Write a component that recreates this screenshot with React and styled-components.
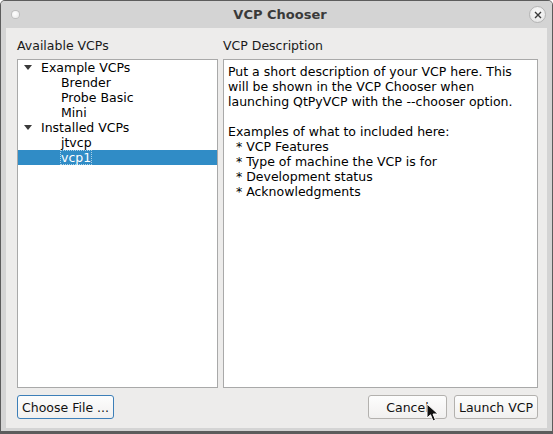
import React from "react";
import styled, { createGlobalStyle } from "styled-components";

const GlobalStyle = createGlobalStyle`
  html, body {
    margin: 0;
    padding: 0;
    background: #ffffff;
  }
  * {
    box-sizing: border-box;
  }
`;

const tree = [
  { label: "Example VCPs", children: ["Brender", "Probe Basic", "Mini"] },
  { label: "Installed VCPs", children: ["jtvcp", "vcp1"] },
];

const descLines = [
  "Put a short description of your VCP here. This",
  "will be shown in the VCP Chooser when",
  "launching QtPyVCP with the --chooser option.",
  "",
  "Examples of what to included here:",
  "  * VCP Features",
  "  * Type of machine the VCP is for",
  "  * Development status",
  "  * Acknowledgments",
];

const App = () => {
  const selected = "vcp1";
  return (
    <>
      <GlobalStyle />
      <Window>
        <TitleBar>
          <MenuDot />
          <Title>VCP Chooser</Title>
          <CloseButton>
            <svg width="8" height="8" viewBox="0 0 8 8">
              <path d="M1 1 L7 7 M7 1 L1 7" stroke="#3a3a3a" strokeWidth="1.4" />
            </svg>
          </CloseButton>
        </TitleBar>
        <Body>
          <Columns>
            <Column $width="201px">
              <Label>Available VCPs</Label>
              <TreeBox>
                {tree.map((group) => (
                  <React.Fragment key={group.label}>
                    <Row>
                      <Arrow>
                        <svg width="8" height="5" viewBox="0 0 8 5">
                          <path d="M0 0 L8 0 L4 5 Z" fill="#3a3a3a" />
                        </svg>
                      </Arrow>
                      <RowText>{group.label}</RowText>
                    </Row>
                    {group.children.map((c) => (
                      <Row key={c} $child $selected={c === selected}>
                        <RowText $focus={c === selected}>{c}</RowText>
                      </Row>
                    ))}
                  </React.Fragment>
                ))}
              </TreeBox>
            </Column>
            <Column $width="315px">
              <Label>VCP Description</Label>
              <DescBox>
                {descLines.map((l, i) => (
                  <DescLine key={i}>{l || "\u00a0"}</DescLine>
                ))}
              </DescBox>
            </Column>
          </Columns>
          <ButtonBar>
            <Button $focused $width="97px">Choose File ...</Button>
            <Spacer />
            <Button $width="79px">Cancel</Button>
            <Button $width="84px">Launch VCP</Button>
          </ButtonBar>
          <Cursor>
            <svg width="14" height="20" viewBox="0 0 14 20">
              <path
                d="M1 1 L1 15 L4.5 11.8 L7 18 L9.5 17 L7 11 L12 11 Z"
                fill="#111"
                stroke="#fff"
                strokeWidth="1"
                strokeLinejoin="round"
              />
            </svg>
          </Cursor>
        </Body>
      </Window>
    </>
  );
};

export default App;

const Window = styled.div`
  width: 553px;
  height: 434px;
  display: flex;
  flex-direction: column;
  background: #d4d4d4;
  border: 1px solid #5c5c5c;
  border-bottom: 3px solid #5c5c5c;
  border-radius: 5px 5px 0 0;
  font-family: "DejaVu Sans", "Liberation Sans", sans-serif;
  font-size: 12.5px;
  color: #000;
  overflow: hidden;
`;

const TitleBar = styled.div`
  height: 27px;
  flex: none;
  display: flex;
  align-items: center;
  padding: 0 6px 0 11px;
  background: #d4d4d4;
`;

const MenuDot = styled.div`
  width: 7px;
  height: 7px;
  border-radius: 50%;
  background: radial-gradient(circle at 40% 40%, #ffffff, #e6e6e6);
  box-shadow: 0 0 0 1px #bdbdbd;
`;

const Title = styled.div`
  flex: 1;
  text-align: center;
  font-weight: bold;
  font-size: 13px;
  color: #3a3a3a;
  padding-left: 12px;
`;

const CloseButton = styled.div`
  width: 17px;
  height: 17px;
  border-radius: 50%;
  display: flex;
  align-items: center;
  justify-content: center;
  background: radial-gradient(circle at 50% 35%, #fafafa, #e2e2e2);
  border: 1px solid #b4b4b4;
`;

const Body = styled.div`
  position: relative;
  flex: 1;
  margin: 0 5px 3px 5px;
  background: #edeceb;
  padding: 10px 9px 9px 11px;
  display: flex;
  flex-direction: column;
`;

const Columns = styled.div`
  flex: 1;
  display: flex;
  gap: 5px;
  min-height: 0;
`;

const Column = styled.div`
  width: ${(p) => p.$width};
  display: flex;
  flex-direction: column;
`;

const Label = styled.div`
  height: 16px;
  line-height: 16px;
  margin-bottom: 5px;
  color: #1a1a1a;
`;

const TreeBox = styled.div`
  flex: 1;
  background: #fff;
  border: 1px solid #a9a9a9;
  padding-top: 0;
  user-select: none;
`;

const Row = styled.div`
  height: 15px;
  display: flex;
  align-items: center;
  padding-left: ${(p) => (p.$child ? "42px" : "5px")};
  background: ${(p) => (p.$selected ? "#308cc6" : "transparent")};
  color: ${(p) => (p.$selected ? "#fff" : "#000")};
`;

const Arrow = styled.span`
  width: 17px;
  display: flex;
  align-items: center;
  padding-left: 1px;
`;

const RowText = styled.span`
  line-height: 15px;
  padding: 0 1px;
  outline: ${(p) => (p.$focus ? "1px dotted rgba(255,255,255,0.6)" : "none")};
  outline-offset: -1px;
`;

const DescBox = styled.div`
  flex: 1;
  background: #fff;
  border: 1px solid #a9a9a9;
  padding: 4px 4px;
`;

const DescLine = styled.div`
  line-height: 15px;
  white-space: pre;
  color: #000;
`;

const ButtonBar = styled.div`
  margin-top: 7px;
  display: flex;
  gap: 7px;
  align-items: center;
`;

const Spacer = styled.div`
  flex: 1;
`;

const Button = styled.div`
  width: ${(p) => p.$width};
  height: 24px;
  display: flex;
  align-items: center;
  justify-content: center;
  border-radius: 3px;
  border: 1px solid ${(p) => (p.$focused ? "#3d7fb8" : "#b3b1ae")};
  background: linear-gradient(#fdfdfd, #f1f0ef);
  color: #111;
  white-space: nowrap;
`;

const Cursor = styled.div`
  position: absolute;
  left: 420px;
  top: 375px;
  pointer-events: none;
`;
